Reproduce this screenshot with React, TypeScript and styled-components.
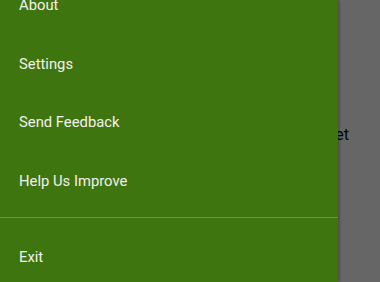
import React from 'react';
import styled, { createGlobalStyle } from 'styled-components';

const GlobalStyle = createGlobalStyle`
    html, body {
        margin: 0;
        padding: 0;
        background: #ffffff;
    }
`

const Screen = styled.div`
    position: relative;
    width: 380px;
    height: 282px;
    overflow: hidden;
    background: #ffffff;
    font-family: Roboto, 'Noto Sans', sans-serif;
`

const PageContent = styled.div`
    padding: 125px 31px 0 0;
    text-align: right;
    font-size: 16px;
    color: #111111;
`

const Scrim = styled.div`
    position: absolute;
    inset: 0;
    background: rgba(0, 0, 0, 0.6);
`

const Drawer = styled.nav`
    position: absolute;
    top: 0;
    left: 0;
    bottom: 0;
    width: 338px;
    background: #3f750f;
    box-shadow: 1px 0 3px rgba(0, 0, 0, 0.35);
    overflow: hidden;
`

const MenuList = styled.ul`
    list-style: none;
    margin: -24px 0 0 0;
    padding: 0;
    display: flex;
    flex-direction: column;
`

const MenuItem = styled.li`
    height: 58.5px;
    display: flex;
    align-items: center;
    padding-left: 19px;
    font-size: 14.8px;
    color: #f1f1ec;
`

const Divider = styled.li`
    height: 1px;
    margin: 7px 0 10px 0;
    background: #66963e;
`

const topItems = ["About", "Settings", "Send Feedback", "Help Us Improve"];

const App: React.FC = () => {
    return (
        <Screen>
            <GlobalStyle />

            {/* Page under the open drawer */}
            <PageContent>Budget</PageContent>

            <Scrim />

            <Drawer>
                <MenuList>
                    {topItems.map((label) => (
                        <MenuItem key={label}>{label}</MenuItem>
                    ))}
                    <Divider />
                    <MenuItem>Exit</MenuItem>
                </MenuList>
            </Drawer>
        </Screen>
    )
}

export default App;
